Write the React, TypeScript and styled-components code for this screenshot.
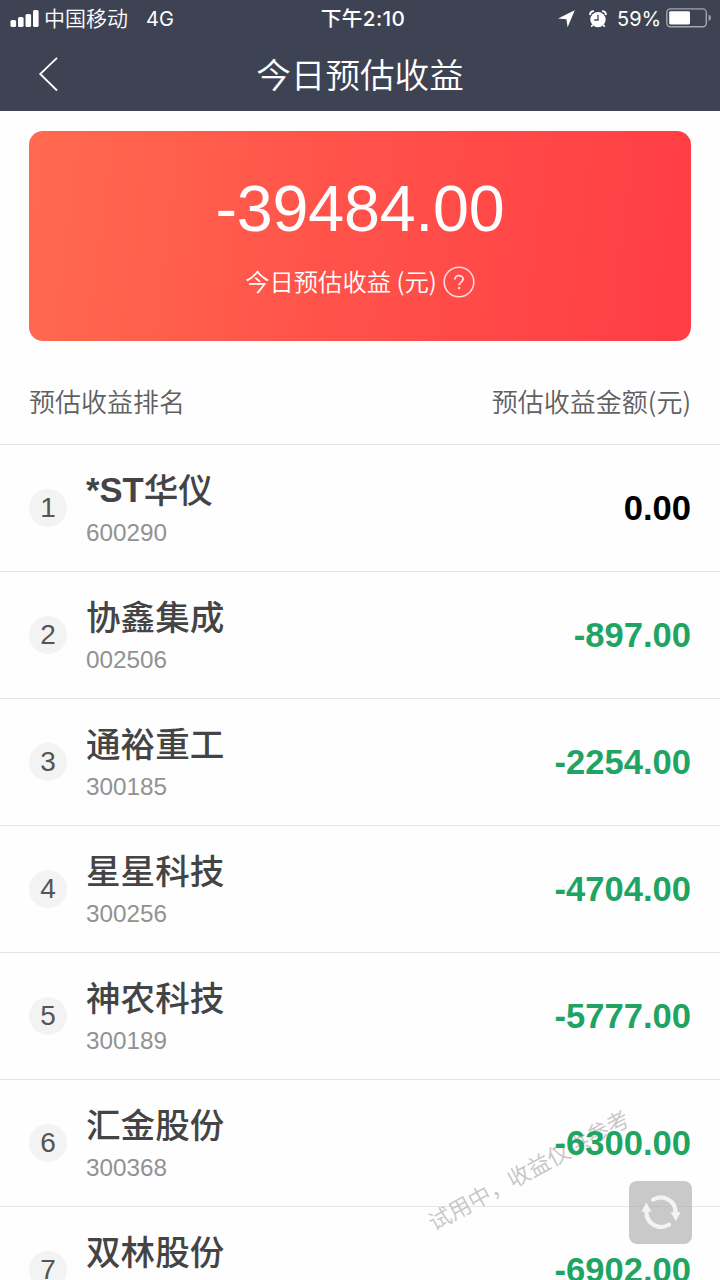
import React from 'react';
import styled, { createGlobalStyle } from 'styled-components';

const GlobalStyle = createGlobalStyle`
  * { box-sizing: border-box; }
  html, body { margin: 0; padding: 0; }
  body {
    background: #fefefe;
    font-family: "Liberation Sans", "Noto Sans CJK SC", sans-serif;
    overflow: hidden;
  }
`;

const Screen = styled.div`
  position: relative;
  width: 720px;
  height: 1280px;
  overflow: hidden;
  background: #fefefe;
`;

const Header = styled.header`
  height: 111px;
  background: #3e4354;
  color: #fff;
`;

const StatusBar = styled.div`
  display: grid;
  grid-template-columns: 1fr auto 1fr;
  align-items: center;
  height: 37px;
  padding: 0 10px;
  font-family: Inter, "Noto Sans CJK SC", sans-serif;
  font-size: 20px;
  line-height: 37px;
`;

const StatusGroup = styled.div<{ $end?: boolean }>`
  display: flex;
  align-items: center;
  justify-content: ${(p) => (p.$end ? 'flex-end' : 'flex-start')};
`;

const Carrier = styled.span`
  margin-left: 5px;
  font-family: "Noto Sans CJK SC", sans-serif;
  font-size: 21px;
  font-weight: 350;
  line-height: 35px;
  padding-bottom: 2px;
`;

const Network = styled.span`
  margin-left: 18px;
  padding-top: 1px;
  line-height: 36px;
`;

const Clock = styled.span`
  padding-left: 6px;
  font-size: 20.7px;
  font-weight: 500;
  letter-spacing: 0.4px;
`;

const Percent = styled.span`
  margin: 0 5px 0 10px;
  padding-top: 1px;
  line-height: 36px;
  letter-spacing: -0.1px;
`;

const TitleBar = styled.div`
  display: grid;
  grid-template-columns: 100px 1fr 100px;
  align-items: center;
  height: 74px;
`;

const BackButton = styled.button`
  display: flex;
  width: 60px;
  height: 60px;
  padding: 0 0 0 38px;
  align-items: center;
  border: 0;
  background: none;
`;

const Title = styled.h1`
  margin: 0;
  padding-bottom: 2px;
  font-family: "Noto Sans CJK SC", sans-serif;
  font-size: 34.6px;
  font-weight: 350;
  line-height: 72px;
  text-align: center;
`;

const SummaryCard = styled.section`
  display: flex;
  flex-direction: column;
  align-items: center;
  width: 662px;
  height: 210px;
  margin: 20px auto 0;
  padding-top: 41px;
  border-radius: 14px;
  background: linear-gradient(97deg, #ff6a50 0%, #ff534a 45%, #ff3d44 100%);
  color: #fff;
`;

const Total = styled.div`
  font-size: 64.6px;
  line-height: 74px;
  letter-spacing: -0.2px;
`;

const SummaryLabel = styled.div`
  display: flex;
  align-items: center;
  height: 34px;
  margin-top: 19px;
  gap: 6px;
  font-family: "Noto Sans CJK SC", sans-serif;
  font-size: 24.3px;
  font-weight: 350;
  line-height: 34px;
`;

const LabelText = styled.span`
  padding-bottom: 3px;
`;

const ListHeader = styled.div`
  display: flex;
  justify-content: space-between;
  height: 104px;
  padding: 0 29px;
  border-bottom: 1px solid #e3e3e3;
  color: #606060;
  font-family: "Noto Sans CJK SC", sans-serif;
  font-size: 26px;
  font-weight: 350;
  line-height: 120px;
`;

const Row = styled.li`
  display: flex;
  align-items: center;
  height: 127px;
  padding: 0 29px;
  border-bottom: 1px solid #e6e6e6;
`;

const List = styled.ul`
  margin: 0;
  padding: 0;
  list-style: none;
`;

const Rank = styled.span`
  width: 38px;
  height: 38px;
  border-radius: 50%;
  background: #f3f3f3;
  color: #555;
  font-size: 28px;
  line-height: 38px;
  text-align: center;
`;

const Stock = styled.div`
  flex: 1;
  margin-left: 19px;
`;

const StockName = styled.div`
  height: 50px;
  color: #444;
  font-family: "Noto Sans CJK SC", sans-serif;
  font-size: 34.6px;
  font-weight: 500;
  line-height: 46px;
`;

const Prefix = styled.span`
  font-family: "Liberation Sans", sans-serif;
  font-weight: 700;
  line-height: 1;
  vertical-align: 1px;
`;

const StockCode = styled.div`
  height: 36px;
  color: #929292;
  font-size: 24.3px;
  line-height: 36px;
`;

const Amount = styled.span<{ $flat: boolean }>`
  position: relative;
  z-index: 1;
  color: ${(p) => (p.$flat ? '#000' : '#1fa463')};
  font-size: 34.6px;
  font-weight: 700;
  line-height: 40px;
`;

const Watermark = styled.div`
  position: absolute;
  left: 527.5px;
  top: 1168.5px;
  color: #c6c6c6;
  font-family: "Noto Sans CJK SC", sans-serif;
  font-size: 22.5px;
  font-weight: 350;
  line-height: 30px;
  white-space: nowrap;
  transform: translate(-50%, -50%) rotate(-28.5deg);
`;

const RefreshButton = styled.button`
  position: absolute;
  z-index: 2;
  left: 629px;
  top: 1180.5px;
  display: flex;
  align-items: center;
  justify-content: center;
  width: 63px;
  height: 63px;
  padding: 0;
  border: 0;
  border-radius: 8px;
  background: rgba(165, 165, 165, 0.6);
`;

const stocks = [
  { prefix: '*ST', name: '华仪', code: '600290', amount: '0.00' },
  { name: '协鑫集成', code: '002506', amount: '-897.00' },
  { name: '通裕重工', code: '300185', amount: '-2254.00' },
  { name: '星星科技', code: '300256', amount: '-4704.00' },
  { name: '神农科技', code: '300189', amount: '-5777.00' },
  { name: '汇金股份', code: '300368', amount: '-6300.00' },
  { name: '双林股份', code: '', amount: '-6902.00' },
];

const SignalIcon = () => (
  <svg width="29" height="18" viewBox="0 0 29 18" fill="#fff">
    <rect x="0.5" y="10" width="5.6" height="7" rx="1.6" />
    <rect x="8" y="7" width="5.6" height="10" rx="1.6" />
    <rect x="15.5" y="4" width="5.6" height="13" rx="1.6" />
    <rect x="23" y="0" width="5.6" height="17" rx="1.6" />
  </svg>
);

const LocationIcon = () => (
  <svg width="17" height="18" viewBox="0 0 17 18" fill="#fff">
    <path d="M16.8 0.3 L9.6 17.3 L8.4 9.2 L0 8.4 Z" />
  </svg>
);

const AlarmSvg = styled.svg`
  margin-left: 14px;
`;

const AlarmIcon = () => (
  <AlarmSvg width="18" height="18" viewBox="0 0 18 18">
    <circle cx="9" cy="9.6" r="7.7" fill="#fff" />
    <path d="M1.1 4.3 Q1.3 1.6 4.2 1.1 M16.9 4.3 Q16.7 1.6 13.8 1.1" fill="none" stroke="#fff" strokeWidth="1.9" strokeLinecap="round" />
    <path d="M3.6 15 L2.3 16.8 M14.4 15 L15.7 16.8" stroke="#fff" strokeWidth="1.6" />
    <path d="M9 4.8 V10 H5.2" fill="none" stroke="#3e4354" strokeWidth="1.3" />
  </AlarmSvg>
);

const BatterySvg = styled.svg`
  margin-right: -2px;
  margin-bottom: 2px;
`;

const BatteryIcon = () => (
  <BatterySvg width="46" height="20" viewBox="0 0 46 20">
    <rect x="0.8" y="0.9" width="39.5" height="17.8" rx="3.6" fill="none" stroke="#a3a6ae" strokeWidth="1.4" />
    <rect x="3.2" y="3.2" width="20.8" height="13.2" rx="1.4" fill="#fff" />
    <path d="M42.6 6.6 Q45 7.5 45 9.8 Q45 12.1 42.6 13 Z" fill="#a3a6ae" />
  </BatterySvg>
);

const HelpIcon = () => (
  <svg width="32" height="32" viewBox="0 0 32 32" fill="none" stroke="#fff" strokeOpacity="0.8">
    <circle cx="16" cy="16" r="14.8" strokeWidth="1.6" />
    <path d="M11.9 13.4 C11.9 8.4 20.1 8.4 20.1 13.1 C20.1 16.2 16.1 16.2 16.1 19.3" strokeWidth="1.9" />
    <path d="M16.1 21 V23.2" strokeWidth="2.2" />
  </svg>
);

const RefreshIcon = () => (
  <svg width="42" height="42" viewBox="0 0 42 42">
    <path d="M13.2 8.6 A14.8 14.8 0 0 1 35.6 21.5" fill="none" stroke="#f3f3f3" strokeWidth="4.2" strokeLinecap="round" />
    <path d="M29.2 33.6 A14.8 14.8 0 0 1 6.4 20.8" fill="none" stroke="#f3f3f3" strokeWidth="4.2" strokeLinecap="round" />
    <path d="M30.6 21.3 H40.6 L35.8 30.2 Z M1.4 20.8 H11.4 L6.4 11.6 Z" fill="#f3f3f3" />
  </svg>
);

export default function App() {
  return (
    <Screen>
      <GlobalStyle />
      <Header>
        <StatusBar>
          <StatusGroup>
            <SignalIcon />
            <Carrier>中国移动</Carrier>
            <Network>4G</Network>
          </StatusGroup>
          <Clock>下午2:10</Clock>
          <StatusGroup $end>
            <LocationIcon />
            <AlarmIcon />
            <Percent>59%</Percent>
            <BatteryIcon />
          </StatusGroup>
        </StatusBar>
        <TitleBar>
          <BackButton aria-label="返回">
            <svg width="21" height="36" viewBox="0 0 21 36" fill="none" stroke="#fff" strokeWidth="1.8">
              <path d="M19 1.8 L2.2 18 L19 34.5" />
            </svg>
          </BackButton>
          <Title>今日预估收益</Title>
        </TitleBar>
      </Header>
      <SummaryCard>
        <Total>-39484.00</Total>
        <SummaryLabel>
          <LabelText>今日预估收益 (元)</LabelText>
          <HelpIcon />
        </SummaryLabel>
      </SummaryCard>
      <ListHeader>
        <span>预估收益排名</span>
        <span>预估收益金额(元)</span>
      </ListHeader>
      <List>
        {stocks.map((s, i) => (
          <Row key={s.name}>
            <Rank>{i + 1}</Rank>
            <Stock>
              <StockName>
                {s.prefix && <Prefix>{s.prefix}</Prefix>}
                {s.name}
              </StockName>
              <StockCode>{s.code}</StockCode>
            </Stock>
            <Amount $flat={s.amount === '0.00'}>{s.amount}</Amount>
          </Row>
        ))}
      </List>
      <Watermark>试用中，收益仅供参考</Watermark>
      <RefreshButton aria-label="刷新">
        <RefreshIcon />
      </RefreshButton>
    </Screen>
  );
}
